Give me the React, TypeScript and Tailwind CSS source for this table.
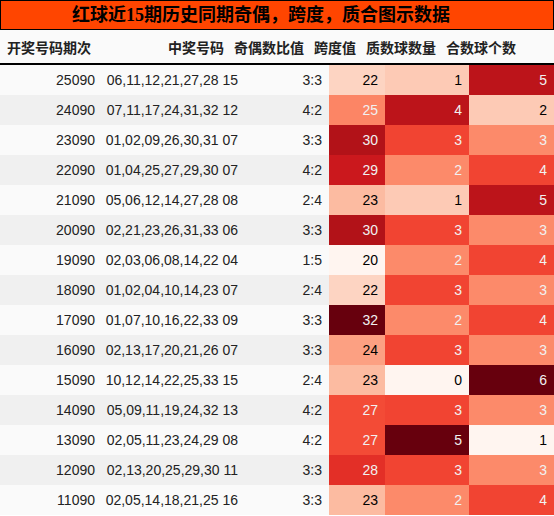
const rows = [
  ["25090", "06,11,12,21,27,28 15", "3:3", 22, 1, 5],
  ["24090", "07,11,17,24,31,32 12", "4:2", 25, 4, 2],
  ["23090", "01,02,09,26,30,31 07", "3:3", 30, 3, 3],
  ["22090", "01,04,25,27,29,30 07", "4:2", 29, 2, 4],
  ["21090", "05,06,12,14,27,28 08", "2:4", 23, 1, 5],
  ["20090", "02,21,23,26,31,33 06", "3:3", 30, 3, 3],
  ["19090", "02,03,06,08,14,22 04", "1:5", 20, 2, 4],
  ["18090", "01,02,04,10,14,23 07", "2:4", 22, 3, 3],
  ["17090", "01,07,10,16,22,33 09", "3:3", 32, 2, 4],
  ["16090", "02,13,17,20,21,26 07", "3:3", 24, 3, 3],
  ["15090", "10,12,14,22,25,33 15", "2:4", 23, 0, 6],
  ["14090", "05,09,11,19,24,32 13", "4:2", 27, 3, 3],
  ["13090", "02,05,11,23,24,29 08", "4:2", 27, 5, 1],
  ["12090", "02,13,20,25,29,30 11", "3:3", 28, 3, 3],
  ["11090", "02,05,14,18,21,25 16", "3:3", 23, 2, 4],
] as const;

// Reds gradient, span column (min 20, max 32)
const spanColor: Record<number, string> = {
  20: "bg-[#fff5f0] text-black",
  22: "bg-[#fdd4c2] text-black",
  23: "bg-[#fcbba1] text-black",
  24: "bg-[#fca082] text-black",
  25: "bg-[#fc8565] text-[#f1f1f1]",
  27: "bg-[#f34b36] text-[#f1f1f1]",
  28: "bg-[#e32f27] text-[#f1f1f1]",
  29: "bg-[#cb181d] text-[#f1f1f1]",
  30: "bg-[#b21218] text-[#f1f1f1]",
  32: "bg-[#67000d] text-[#f1f1f1]",
};

// five steps, used by both count columns
const levelColor = [
  "bg-[#fff5f0] text-black",
  "bg-[#fdcab5] text-black",
  "bg-[#fc8a6a] text-[#f1f1f1]",
  "bg-[#f14432] text-[#f1f1f1]",
  "bg-[#bc141a] text-[#f1f1f1]",
  "bg-[#67000d] text-[#f1f1f1]",
];

const cell = "flex h-full items-center justify-end whitespace-nowrap pr-[7px]";

const App = () => {
  return (
    <div className="w-[554px] bg-white font-['Liberation_Sans','Noto_Sans_CJK_SC',sans-serif] text-[14px] text-[#222]">
      <div className="flex h-[30px] items-center justify-center border border-black bg-[#ff4500] pr-[32px] font-['Liberation_Serif','Noto_Sans_CJK_SC',serif] text-[18px] font-bold text-black">
        红球近15期历史同期奇偶，跨度，质合图示数据
      </div>
      <div className="flex h-[35px] items-center border-b-2 border-black bg-[#fafafa] pt-[3px] text-[14px] font-bold text-[#222]">
        <div className="pl-[7px]">开奖号码期次</div>
        <div className="ml-auto flex gap-[10px] pr-[38px]">
          <span>中奖号码</span>
          <span>奇偶数比值</span>
          <span>跨度值</span>
          <span>质数球数量</span>
          <span>合数球个数</span>
        </div>
      </div>
      {rows.map((r, i) => (
        <div
          key={r[0]}
          className={`grid h-[30px] grid-cols-[102px_143px_84px_56px_84px_85px] ${
            i % 2 === 0 ? "bg-[#fafafa]" : "bg-[#f0f0f0]"
          }`}
        >
          <div className={cell}>{r[0]}</div>
          <div className={cell}>{r[1]}</div>
          <div className={cell}>{r[2]}</div>
          <div className={`${cell} ${spanColor[r[3]]}`}>{r[3]}</div>
          <div className={`${cell} ${levelColor[r[4]]}`}>{r[4]}</div>
          <div className={`${cell} ${levelColor[r[5] - 1]}`}>{r[5]}</div>
        </div>
      ))}
    </div>
  );
};

export default App;
